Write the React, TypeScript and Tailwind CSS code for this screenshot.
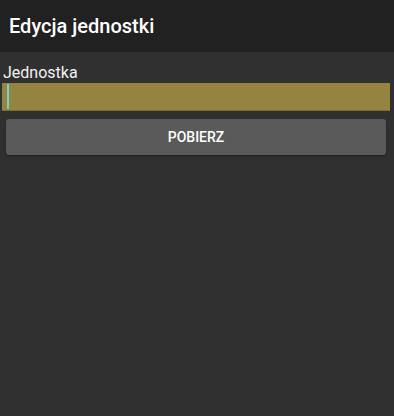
export default function App() {
  return (
    <div className="flex h-[416px] w-[394px] flex-col bg-[#303030] font-['Roboto',sans-serif]">
      <header className="flex h-[52px] items-center bg-[#212121] px-[9px]">
        <h1 className="text-[20px] font-medium text-white">Edycja jednostki</h1>
      </header>
      <div className="flex flex-col px-[2px] pt-[11px]">
        <label className="pl-[1px] text-[16px] leading-[20px] text-[#f2f2f2]">Jednostka</label>
        <div className="relative mt-[0px] mr-[2px] h-[28px] border-b border-[#7d6c34] bg-[#958340]">
          <span className="absolute left-[5px] top-[1px] h-[25px] w-[2px] bg-[#72d2c8]" />
        </div>
        <button
          type="button"
          className="ml-[4px] mr-[6px] mt-[8px] h-[36px] rounded-[3px] bg-[#5a5a5a] text-[14px] font-medium text-white shadow-[0_1px_2px_rgba(0,0,0,0.4)]"
        >
          POBIERZ
        </button>
      </div>
    </div>
  );
}
